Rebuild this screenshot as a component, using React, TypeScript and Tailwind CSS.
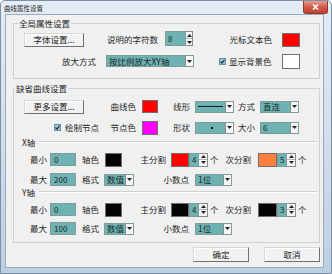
import React from "react";

const Up = () => (
  <svg width="5" height="3" viewBox="0 0 5 3"><path d="M2.5 0 L5 3 L0 3 Z" fill="#222" /></svg>
);
const Down = () => (
  <svg width="5" height="3" viewBox="0 0 5 3"><path d="M0 0 L5 0 L2.5 3 Z" fill="#222" /></svg>
);

function Swatch({ cls }: { cls: string }) {
  return <div className={"border border-[#6f6f6f] " + cls} />;
}

function Btn({ label, cls }: { label: string; cls: string }) {
  return (
    <div
      className={
        "flex h-[14px] items-center justify-center border border-t-[#d8d8d8] border-l-[#d8d8d8] border-r-[#707070] border-b-[#707070] bg-[#f2f2f2] shadow-[inset_1px_1px_0_#ffffff] text-[8.5px] text-[#222] " +
        cls
      }
    >
      {label}
    </div>
  );
}

function Spin({ v, numW, arrW, h }: { v: string; numW: string; arrW: string; h: string }) {
  return (
    <div className={"flex " + h}>
      <div className={"flex items-center border border-[#7e9c9c] bg-[#6fb2b2] pl-[2px] text-[8px] leading-none text-[#1a2a2a] " + numW}>
        {v}
      </div>
      <div className={"flex flex-col border border-l-0 border-[#8a8a8a] bg-[#f6f6f6] " + arrW}>
        <div className="flex flex-1 items-center justify-center border-b border-[#b5b5b5]">
          <Up />
        </div>
        <div className="flex flex-1 items-center justify-center">
          <Down />
        </div>
      </div>
    </div>
  );
}

function Drop({ cls, children }: { cls: string; children?: React.ReactNode }) {
  return (
    <div className={"flex h-[12px] border border-[#7e9c9c] bg-[#6fb2b2] " + cls}>
      <div className="flex flex-1 items-center overflow-hidden pl-[2px] text-[8px] leading-none text-[#1a2a2a]">
        {children}
      </div>
      <div className="flex w-[8px] items-center justify-center border-l border-[#8a8a8a] bg-[#f6f6f6]">
        <Down />
      </div>
    </div>
  );
}

function Input({ v }: { v: string }) {
  return (
    <div className="flex h-[13px] w-[26px] items-center border border-[#7e9c9c] bg-[#6fb2b2] pl-[3px] text-[8px] leading-none text-[#1a2a2a]">
      {v}
    </div>
  );
}

function Label({ text, cls }: { text: string; cls: string }) {
  return <div className={"flex justify-end whitespace-nowrap text-[8.5px] text-[#262626] " + cls}>{text}</div>;
}

function Check() {
  return (
    <div className="flex h-[7px] w-[7px] items-center justify-center border border-[#6f8fa0] bg-[#9cc8d8]">
      <svg width="5" height="5" viewBox="0 0 5 5">
        <path d="M0.5 2.5 L2 4 L4.5 0.8" stroke="#16324a" strokeWidth="1.2" fill="none" />
      </svg>
    </div>
  );
}

function AxisLabel({ text }: { text: string }) {
  return (
    <div className="flex h-[10px] items-center">
      <div className="ml-[8px] text-[8.5px] text-[#262626]">{text}</div>
      <div className="ml-[4px] mr-[2px] h-[2px] flex-1 border-t border-b border-t-[#cfcfcf] border-b-white" />
    </div>
  );
}

function AxisRows({
  min,
  max,
  mainCls,
  mainV,
  subCls,
  subV,
  secondMt,
}: {
  min: string;
  max: string;
  mainCls: string;
  mainV: string;
  subCls: string;
  subV: string;
  secondMt: string;
}) {
  return (
    <>
      <div className="mt-[5px] flex h-[15px] items-center">
        <Label text="最小" cls="w-[33px]" />
        <div className="ml-[3px]">
          <Input v={min} />
        </div>
        <Label text="轴色" cls="w-[23px]" />
        <div className="ml-[6px]">
          <Swatch cls="h-[14px] w-[17px] bg-[#050505]" />
        </div>
        <Label text="主分割" cls="w-[44px]" />
        <div className="ml-[5px]">
          <Swatch cls={"h-[14px] w-[18px] " + mainCls} />
        </div>
        <Spin v={mainV} numW="w-[10px]" arrW="w-[9px]" h="h-[14px]" />
        <div className="ml-[2px] w-[9px] text-[8.5px] text-[#262626]">个</div>
        <Label text="次分割" cls="w-[32px]" />
        <div className="ml-[7px]">
          <Swatch cls={"h-[14px] w-[19px] " + subCls} />
        </div>
        <Spin v={subV} numW="w-[10px]" arrW="w-[9px]" h="h-[14px]" />
        <div className="ml-[2px] text-[8.5px] text-[#262626]">个</div>
      </div>
      <div className={"flex h-[15px] items-center " + secondMt}>
        <Label text="最大" cls="w-[33px]" />
        <div className="ml-[3px]">
          <Input v={max} />
        </div>
        <Label text="格式" cls="w-[23px]" />
        <div className="ml-[5px]">
          <Drop cls="w-[30px]">
            <span className="text-[8.5px]">数值</span>
          </Drop>
        </div>
        <Label text="小数点" cls="w-[55px]" />
        <div className="ml-[6px]">
          <Drop cls="w-[37px]">
            <span className="text-[8.5px]">1位</span>
          </Drop>
        </div>
      </div>
    </>
  );
}

export default function App() {
  return (
    <div className="relative h-[274px] w-[332px] overflow-hidden rounded-t-[5px] border border-[#7d8fa6] bg-gradient-to-b from-[#e4ecf5] via-[#d2deeb] to-[#bccfe2] font-['Noto_Sans_CJK_SC','Noto_Sans',sans-serif]">
      <div className="flex h-[13px] items-start justify-between">
        <div className="pl-[3px] pt-[3px] text-[6.5px] leading-[8px] text-[#1e1e1e]">曲线属性设置</div>
        <div className="mr-[3px] flex h-[13px] w-[25px] items-center justify-center rounded-b-[3px] border border-t-0 border-[#8c3b31] bg-gradient-to-b from-[#e79a8f] via-[#d05a4b] to-[#c4402f]">
          <svg width="7" height="6" viewBox="0 0 7 6">
            <path d="M1 0.5 L6 5.5 M6 0.5 L1 5.5" stroke="#ffffff" strokeWidth="1.6" />
          </svg>
        </div>
      </div>
      <div className="ml-[4px] flex h-[254px] w-[319px] flex-col border border-[#9aaac0] bg-[#f0f0f0]">
        <fieldset className="ml-[7px] mt-[3px] w-[307px] border border-[#cbd1d6] pb-[9px]">
          <legend className="ml-[4px] px-[1px] text-[8.5px] leading-[10px] text-[#262626]">全局属性设置</legend>
          <div className="mt-[3px] flex h-[17px] items-center">
            <div className="ml-[10px]">
              <Btn label="字体设置..." cls="w-[60px]" />
            </div>
            <Label text="说明的字符数" cls="w-[74px]" />
            <div className="ml-[7px] -mt-[2px]">
              <Spin v="8" numW="w-[21px]" arrW="w-[7px]" h="h-[15px]" />
            </div>
            <Label text="光标文本色" cls="w-[79px]" />
            <div className="ml-[10px]">
              <Swatch cls="h-[14px] w-[18px] bg-[#ff0000]" />
            </div>
          </div>
          <div className="mt-[5px] flex h-[16px] items-center">
            <Label text="放大方式" cls="w-[82px]" />
            <div className="ml-[10px]">
              <Drop cls="w-[88px]">
                <span className="text-[8.5px]">按比例放大XY轴</span>
              </Drop>
            </div>
            <div className="ml-[25px]">
              <Check />
            </div>
            <div className="ml-[3px] w-[53px] text-[8.5px] text-[#262626]">显示背景色</div>
            <Swatch cls="h-[15px] w-[18px] bg-white" />
          </div>
        </fieldset>
        <fieldset className="ml-[7px] mt-[4px] w-[307px] border border-[#cbd1d6] pb-[6px]">
          <legend className="ml-[1px] px-[1px] text-[8.5px] leading-[10px] text-[#262626]">缺省曲线设置</legend>
          <div className="mt-[6px] flex h-[15px] items-center">
            <div className="ml-[10px]">
              <Btn label="更多设置..." cls="w-[60px]" />
            </div>
            <Label text="曲线色" cls="w-[52px]" />
            <div className="ml-[6px]">
              <Swatch cls="h-[13px] w-[16px] bg-[#ff0000]" />
            </div>
            <Label text="线形" cls="w-[32px]" />
            <div className="ml-[5px]">
              <Drop cls="w-[39px]">
                <div className="mr-[2px] h-[1px] flex-1 bg-[#1a1a1a]" />
              </Drop>
            </div>
            <Label text="方式" cls="w-[21px]" />
            <div className="ml-[5px]">
              <Drop cls="w-[39px]">
                <span className="text-[8.5px]">直连</span>
              </Drop>
            </div>
          </div>
          <div className="mt-[6px] flex h-[15px] items-center">
            <div className="ml-[40px]">
              <Check />
            </div>
            <div className="ml-[4px] w-[34px] whitespace-nowrap text-[8.5px] text-[#262626]">绘制节点</div>
            <Label text="节点色" cls="w-[37px]" />
            <div className="ml-[6px]">
              <Swatch cls="h-[14px] w-[16px] bg-[#ff00ff]" />
            </div>
            <Label text="形状" cls="w-[32px]" />
            <div className="ml-[5px]">
              <Drop cls="w-[39px]">
                <div className="flex flex-1 justify-center">
                  <div className="h-[2px] w-[2px] bg-[#111]" />
                </div>
              </Drop>
            </div>
            <Label text="大小" cls="w-[21px]" />
            <div className="ml-[5px]">
              <Drop cls="w-[39px]">6</Drop>
            </div>
          </div>
          <div className="mt-[2px]">
            <AxisLabel text="X轴" />
          </div>
          <AxisRows
            min="0"
            max="200"
            mainCls="bg-[#ff0000]"
            mainV="4"
            subCls="bg-[#ff7f3f]"
            subV="5"
            secondMt="mt-[5px]"
          />
          <AxisLabel text="Y轴" />
          <AxisRows
            min="0"
            max="100"
            mainCls="bg-[#050505]"
            mainV="4"
            subCls="bg-[#050505]"
            subV="3"
            secondMt="mt-[4px]"
          />
        </fieldset>
        <div className="mt-[4px] flex">
          <div className="ml-[187px]">
            <Btn label="确定" cls="h-[15px] w-[56px]" />
          </div>
          <div className="ml-[15px]">
            <Btn label="取消" cls="h-[15px] w-[56px]" />
          </div>
        </div>
      </div>
    </div>
  );
}
